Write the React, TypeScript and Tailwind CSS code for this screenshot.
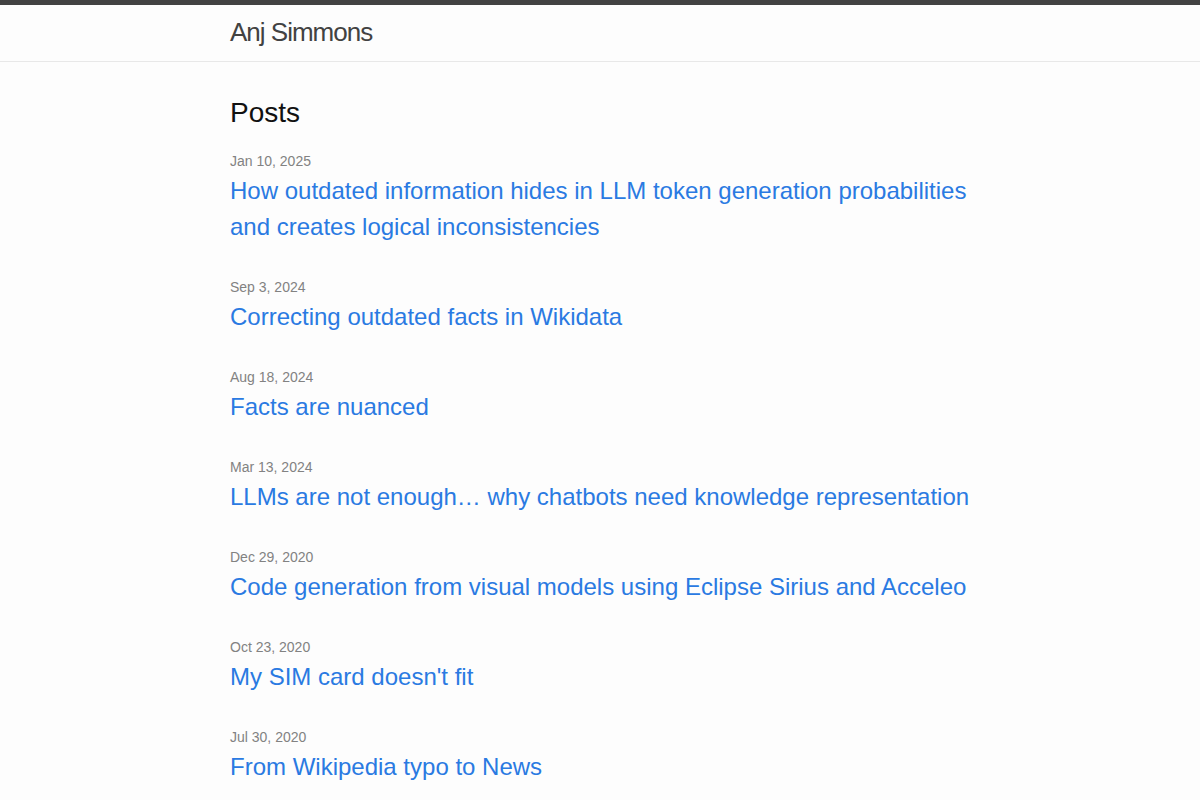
import React from "react";

const posts = [
  { date: "Jan 10, 2025", title: "How outdated information hides in LLM token generation probabilities and creates logical inconsistencies" },
  { date: "Sep 3, 2024", title: "Correcting outdated facts in Wikidata" },
  { date: "Aug 18, 2024", title: "Facts are nuanced" },
  { date: "Mar 13, 2024", title: "LLMs are not enough… why chatbots need knowledge representation" },
  { date: "Dec 29, 2020", title: "Code generation from visual models using Eclipse Sirius and Acceleo" },
  { date: "Oct 23, 2020", title: "My SIM card doesn't fit" },
  { date: "Jul 30, 2020", title: "From Wikipedia typo to News" },
];

export default function App() {
  return (
    <div
      className="min-h-screen bg-[#fdfdfd] text-[#111] text-[16px] leading-[24px]"
      style={{ fontFamily: '"Liberation Sans", Arial, Helvetica, sans-serif' }}
    >
      <header className="border-t-[5px] border-t-[#424242] border-b border-b-[#e8e8e8] h-[62px]">
        <div className="w-[740px] mx-auto">
          <a className="block text-[26px] leading-[54px] tracking-[-1px] text-[#424242]">Anj Simmons</a>
        </div>
      </header>
      <main className="py-[30px]">
        <div className="w-[740px] mx-auto">
          <h2 className="text-[28px] leading-[42px] mb-[15px]">Posts</h2>
          <ul>
            {posts.map((p) => (
              <li key={p.date} className="mb-[30px]">
                <span className="text-[14px] text-[#828282]">{p.date}</span>
                <h3>
                  <a className="block text-[24px] leading-[36px] text-[#2a7ae2]">{p.title}</a>
                </h3>
              </li>
            ))}
          </ul>
        </div>
      </main>
    </div>
  );
}
